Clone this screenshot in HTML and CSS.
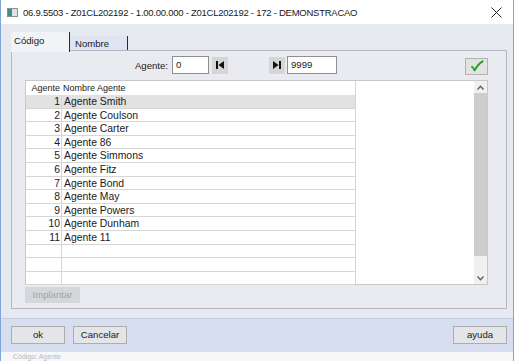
FILE: index.html
```html
<!DOCTYPE html>
<html>
<head>
<meta charset="utf-8">
<link rel="stylesheet" href="styles.css">
</head>
<body>
<div class="window">
  <div class="titlebar">
    <svg class="appicon" width="11" height="9" viewBox="0 0 11 9">
      <rect x="0.5" y="0.5" width="10" height="8" fill="#dfe3e8" stroke="#8a9099"/>
      <rect x="1" y="1" width="4" height="7" fill="#3f8f86"/>
    </svg>
    <span class="title">06.9.5503 - Z01CL202192 - 1.00.00.000 - Z01CL202192 - 172 - DEMONSTRACAO</span>
    <svg class="close" width="11" height="11" viewBox="0 0 11 11">
      <path d="M0.5 0.5 L10.5 10.5 M10.5 0.5 L0.5 10.5" stroke="#222" stroke-width="1"/>
    </svg>
  </div>
  <div class="body">
    <div class="tabs">
      <div class="tab tab-active">Código</div>
      <div class="tab tab-other">Nombre</div>
    </div>
    <div class="panel">
      <div class="toolbar">
        <label class="lbl">Agente:</label>
        <div class="field field-from">0</div>
        <div class="navbtn">
          <svg width="10" height="10" viewBox="0 0 10 10"><rect x="1" y="1" width="2" height="8" fill="#111"/><path d="M9 1 L9 9 L3.5 5 Z" fill="#111"/></svg>
        </div>
        <div class="navbtn navbtn-last">
          <svg width="10" height="10" viewBox="0 0 10 10"><path d="M1 1 L1 9 L6.5 5 Z" fill="#111"/><rect x="7" y="1" width="2" height="8" fill="#111"/></svg>
        </div>
        <div class="field field-to">9999</div>
        <div class="okbtn">
          <svg width="14" height="12" viewBox="0 0 14 12"><path d="M2 6.8 C3 7.6 3.8 8.8 4.6 10.4 C6.6 6.6 9 3.6 12.6 1.4" fill="none" stroke="#2fae2a" stroke-width="2" stroke-linecap="round" stroke-linejoin="round"/><path d="M4.6 10.4 C6.6 6.6 9 3.6 12.6 1.4" fill="none" stroke="#1d7f1a" stroke-width="0.8" stroke-linecap="round"/></svg>
        </div>
      </div>
      <div class="gridbox">
        <div class="grid">
          <div class="row head"><div class="c1">Agente</div><div class="c2">Nombre Agente</div></div>
          <div class="row sel"><div class="c1">1</div><div class="c2">Agente Smith</div></div>
          <div class="row"><div class="c1">2</div><div class="c2">Agente Coulson</div></div>
          <div class="row"><div class="c1">3</div><div class="c2">Agente Carter</div></div>
          <div class="row"><div class="c1">4</div><div class="c2">Agente 86</div></div>
          <div class="row"><div class="c1">5</div><div class="c2">Agente Simmons</div></div>
          <div class="row"><div class="c1">6</div><div class="c2">Agente Fitz</div></div>
          <div class="row"><div class="c1">7</div><div class="c2">Agente Bond</div></div>
          <div class="row"><div class="c1">8</div><div class="c2">Agente May</div></div>
          <div class="row"><div class="c1">9</div><div class="c2">Agente Powers</div></div>
          <div class="row"><div class="c1">10</div><div class="c2">Agente Dunham</div></div>
          <div class="row"><div class="c1">11</div><div class="c2">Agente 11</div></div>
          <div class="row"><div class="c1"></div><div class="c2"></div></div>
          <div class="row"><div class="c1"></div><div class="c2"></div></div>
          <div class="row"><div class="c1"></div><div class="c2"></div></div>
        </div>
        <div class="blank"></div>
        <div class="scrollbar">
          <div class="arrow">
            <svg width="7" height="5" viewBox="0 0 7 5"><path d="M0.5 4.5 L3.5 1.2 L6.5 4.5" fill="none" stroke="#606060" stroke-width="1.4"/></svg>
          </div>
          <div class="thumb"></div>
          <div class="track"></div>
          <div class="arrow">
            <svg width="7" height="5" viewBox="0 0 7 5"><path d="M0.5 0.5 L3.5 3.8 L6.5 0.5" fill="none" stroke="#606060" stroke-width="1.4"/></svg>
          </div>
        </div>
      </div>
      <div class="implantar">Implantar</div>
    </div>
  </div>
  <div class="footer">
    <div class="btn">ok</div>
    <div class="btn">Cancelar</div>
    <div class="btn btn-help">ayuda</div>
  </div>
  <div class="status"><span class="status-text">Código: Agente</span></div>
</div>
</body>
</html>
```

FILE: styles.css
```css
* { box-sizing: border-box; }
html, body { margin: 0; padding: 0; }
body {
  width: 514px;
  height: 361px;
  overflow: hidden;
  font-family: "Liberation Sans", Arial, sans-serif;
  font-size: 10px;
  color: #1a1a1a;
  background: #ffffff;
}
.window {
  width: 514px;
  height: 361px;
  border-left: 1px solid #7ea6d6;
  border-right: 1px solid #7ea6d6;
  background: #e7e9f0;
  display: flex;
  flex-direction: column;
}
.titlebar {
  height: 24px;
  background: #ffffff;
  display: flex;
  align-items: center;
  padding-left: 6px;
}
.appicon { flex: none; }
.title {
  margin-left: 5px;
  font-size: 9.5px;
  letter-spacing: -0.25px;
  color: #1a1a1a;
  white-space: nowrap;
}
.close { margin-left: auto; margin-right: 11px; }

.body {
  padding: 8px 6px 0 10px;
  height: 285px;
}
.tabs {
  display: flex;
  height: 18px;
  align-items: flex-end;
}
.tab {
  font-size: 9.6px;
  height: 16px;
  line-height: 16px;
}
.tab-active {
  width: 59px;
  background: #f2f3f6;
  padding-left: 3px;
  border-right: 1px solid #2b2b2b;
  height: 20px;
  line-height: 18px;
  margin-bottom: -2px;
  position: relative;
  z-index: 1;
}
.tab-other {
  width: 58px;
  height: 14px;
  line-height: 15px;
  background: #dfe4f3;
  padding-left: 5px;
  border-right: 1px solid #2b2b2b;
}
.panel {
  height: 259px;
  border: 1px solid #b4b7c0;
  border-radius: 3px 0 0 0;
  background: #e9ebf1;
  padding: 4px 18px 0 13px;
}
.toolbar {
  display: flex;
  align-items: center;
  height: 20px;
  padding-left: 108px;
}
.lbl {
  width: 35px;
  text-align: right;
  font-size: 9.6px;
}
.field {
  height: 18px;
  border: 1px solid #8f8f8f;
  background: #fff;
  font-size: 9.6px;
  line-height: 16px;
  padding-left: 3px;
}
.field-from { width: 37px; margin-left: 4px; }
.field-to { width: 50px; margin-left: 2px; }
.navbtn {
  width: 16px;
  height: 17px;
  background: #d6d6d6;
  display: flex;
  align-items: center;
  justify-content: center;
  margin-left: 3px;
}
.navbtn-last { margin-left: 41px; }
.okbtn {
  margin-left: auto;
  width: 23px;
  height: 17px;
  background: #e3e3e3;
  border: 1px solid #b3b3b3;
  display: flex;
  align-items: center;
  justify-content: center;
  margin-top: 2px;
}
.gridbox {
  margin-top: 5px;
  height: 205px;
  border: 1px solid #c6c8cc;
  background: #fff;
  display: flex;
}
.grid {
  width: 330px;
  border-right: 1px solid #d4d4d4;
}
.row {
  display: flex;
  height: 13.6px;
  border-bottom: 1px solid #d6d6d6;
  font-size: 10.4px;
  line-height: 13px;
}
.row.head {
  height: 14px;
  border-bottom: none;
  font-size: 9px;
  line-height: 14px;
}
.row.sel { background: #e2e2e2; }
.c1 {
  width: 36px;
  text-align: right;
  padding-right: 1px;
  border-right: 1px solid #d6d6d6;
  white-space: nowrap;
}
.head .c1 { border-right: none; padding-right: 2px; }
.c2 { flex: 1; padding-left: 2px; white-space: nowrap; }
.head .c2 { padding-left: 1px; }
.blank { flex: 1; }
.scrollbar {
  width: 13px;
  background: #f0f0f0;
  display: flex;
  flex-direction: column;
}
.arrow {
  height: 12px;
  display: flex;
  align-items: center;
  justify-content: center;
}
.thumb {
  height: 163px;
  background: #cdcdcd;
}
.track { flex: 1; }
.implantar {
  margin-top: 2px;
  width: 55px;
  height: 16px;
  background: #d5d6d9;
  color: #a3a3a3;
  font-size: 9.6px;
  line-height: 16px;
  text-align: center;
}
.footer {
  margin-top: 9px;
  height: 33px;
  background: #d6deef;
  border-top: 1px solid #c4cde0;
  display: flex;
  align-items: center;
  padding: 0 6px 0 10px;
  gap: 8px;
}
.btn {
  width: 54px;
  height: 18px;
  background: #e4e5e8;
  border: 1px solid #adadad;
  font-size: 9.6px;
  line-height: 16px;
  text-align: center;
}
.btn-help { margin-left: auto; }
.status {
  flex: 1;
  background: #f6f7f9;
  border-top: 1px solid #dcdfe6;
  overflow: hidden;
  padding-left: 12px;
}
.status-text {
  display: block;
  font-size: 7px;
  color: #b8b8b8;
  line-height: 8px;
  margin-top: 1px;
}
```
